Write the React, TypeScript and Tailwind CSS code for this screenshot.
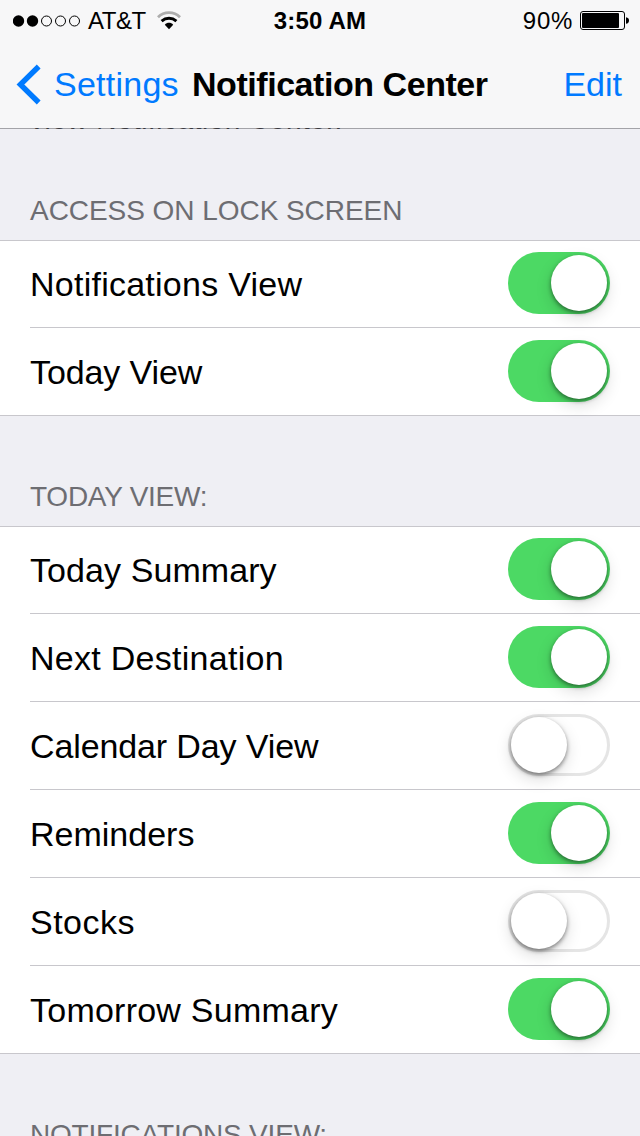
import { useState } from "react";
import clsx from "clsx";

type Item = {
  label: string;
  on: boolean;
  tracking: string;
};

const lockScreenItems: Item[] = [
  { label: "Notifications View", on: true, tracking: "tracking-[0.25px]" },
  { label: "Today View", on: true, tracking: "tracking-[-0.1px]" },
];

const todayItems: Item[] = [
  { label: "Today Summary", on: true, tracking: "tracking-[0.08px]" },
  { label: "Next Destination", on: true, tracking: "tracking-[0.28px]" },
  { label: "Calendar Day View", on: false, tracking: "tracking-[-0.12px]" },
  { label: "Reminders", on: true, tracking: "tracking-normal" },
  { label: "Stocks", on: false, tracking: "tracking-[0.5px]" },
  { label: "Tomorrow Summary", on: true, tracking: "tracking-[0.24px]" },
];

const Switch = ({ on, label, onClick }: { on: boolean; label: string; onClick: () => void }) => (
  <button
    role="switch"
    aria-checked={on}
    aria-label={label}
    onClick={onClick}
    className={clsx(
      "flex h-[62px] w-[102px] shrink-0 items-start rounded-full",
      on ? "justify-end bg-[#4cd964] p-[3px]" : "justify-start border-[3px] border-[#e5e5e5] bg-white"
    )}
  >
    <span className="size-14 rounded-full bg-white shadow-[0_2px_4px_rgba(0,0,0,0.45),0_6px_16px_rgba(0,0,0,0.15)]" />
  </button>
);

const Group = ({ items }: { items: Item[] }) => {
  const [states, setStates] = useState(items.map((i) => i.on));

  const toggle = (index: number) =>
    setStates((prev) => prev.map((s, i) => (i === index ? !s : s)));

  return (
    <ul className="shrink-0 border-y border-[#c8c7cc] bg-white">
      {items.map((item, i) => (
        <li
          key={item.label}
          className={clsx(
            "ml-[30px] flex justify-between border-[#c8c7cc] pr-[30px]",
            // the group's own borders take the missing pixel
            i === 0 ? "h-[87px] pt-[11px]" : "pt-3",
            i > 0 && (i === items.length - 1 ? "h-[87px]" : "h-[88px]"),
            i < items.length - 1 && "border-b"
          )}
        >
          <span className={clsx("pt-3 text-[34px] leading-[40px] whitespace-nowrap", item.tracking)}>
            {item.label}
          </span>
          <Switch on={states[i]} label={item.label} onClick={() => toggle(i)} />
        </li>
      ))}
    </ul>
  );
};

const StatusBar = () => (
  <div className="grid h-10 grid-cols-3 text-2xl leading-[42px]">
    <div className="flex items-center pl-[13px]">
      <svg width="68" height="12" viewBox="0 0 68 12" className="mb-px">
        <circle cx="5.5" cy="6" r="5.7" />
        <circle cx="19.5" cy="6" r="5.7" />
        <circle cx="33.5" cy="6" r="5" fill="none" stroke="#000" />
        <circle cx="47.5" cy="6" r="5" fill="none" stroke="#000" />
        <circle cx="61.5" cy="6" r="5" fill="none" stroke="#000" />
      </svg>
      <span className="ml-[7px] tracking-[-0.5px]">AT&amp;T</span>
      <svg width="24" height="19" viewBox="0 0 24 19" className="mb-0.5 ml-[11px]">
        <path d="M1 6.2C7 0.2 17 0.2 23 6.2" fill="none" stroke="#adadad" strokeWidth="2.8" />
        <path d="M4.6 10.2C9 6.4 15 6.4 19.4 10.2" fill="none" stroke="#000" strokeWidth="3" />
        <path d="M7.8 13.8C10 11.2 14 11.2 16.2 13.8L12 18.2Z" />
      </svg>
    </div>
    <div className="text-center font-bold tracking-[0.2px]">3:50 AM</div>
    <div className="flex items-center justify-end pr-[11px]">
      <span className="mr-[7px] tracking-[0.7px]">90%</span>
      <svg width="49" height="19" viewBox="0 0 49 19" className="mb-0.5">
        <rect x="0.5" y="0.5" width="44" height="18" rx="2.5" fill="none" stroke="#000" />
        <rect x="2" y="2" width="37" height="15" rx="1" />
        <path d="M46 6.2C48 6.5 49 7.8 49 9.5S48 12.5 46 12.8Z" />
      </svg>
    </div>
  </div>
);

const NavBar = () => (
  <div className="flex h-[88px] items-start pt-6 text-[34px] leading-[40px] whitespace-nowrap">
    <button className="flex w-[179px] text-[#007aff]">
      <svg width="26" height="41" viewBox="0 0 26 41" className="ml-4 shrink-0">
        <path d="M22.7 2.5L4.4 20.5L22.7 38.5" fill="none" stroke="currentColor" strokeWidth="5.4" />
      </svg>
      <span className="ml-3 tracking-[0.25px]">Settings</span>
    </button>
    <h1 className="ml-[13px] font-bold tracking-[-0.45px]">Notification Center</h1>
    <button className="mr-[18px] ml-auto text-[#007aff]">Edit</button>
  </div>
);

const SectionTitle = ({ children, className }: { children: string; className: string }) => (
  <h2
    className={clsx(
      "flex shrink-0 items-end pb-2.5 pl-[30px] text-[28px] leading-[38px] whitespace-nowrap text-[#6d6d72]",
      className
    )}
  >
    {children}
  </h2>
);

export default function App() {
  return (
    <main className="flex h-[1136px] w-[640px] flex-col overflow-hidden bg-[#efeff4] font-['Liberation_Sans',Arial,sans-serif] text-black">
      <header className="h-32 shrink-0 bg-[#f7f7f8]">
        <StatusBar />
        <NavBar />
      </header>

      {/* Hairline under the nav bar, with the last pixels of the scrolled footer text in it */}
      <div className="flex h-px shrink-0 items-end overflow-hidden bg-[#a3a3a8] pl-[30px] text-[28px] leading-[18px] tracking-[0.5px] text-[#3a3a40]">
        <p>view Notification Center.</p>
      </div>

      <SectionTitle className="h-[111px] tracking-[-0.05px]">ACCESS ON LOCK SCREEN</SectionTitle>
      <Group items={lockScreenItems} />
      <SectionTitle className="h-[110px] tracking-[-0.25px]">TODAY VIEW:</SectionTitle>
      <Group items={todayItems} />
      <SectionTitle className="h-[110px] tracking-[-0.2px]">NOTIFICATIONS VIEW:</SectionTitle>
    </main>
  );
}
